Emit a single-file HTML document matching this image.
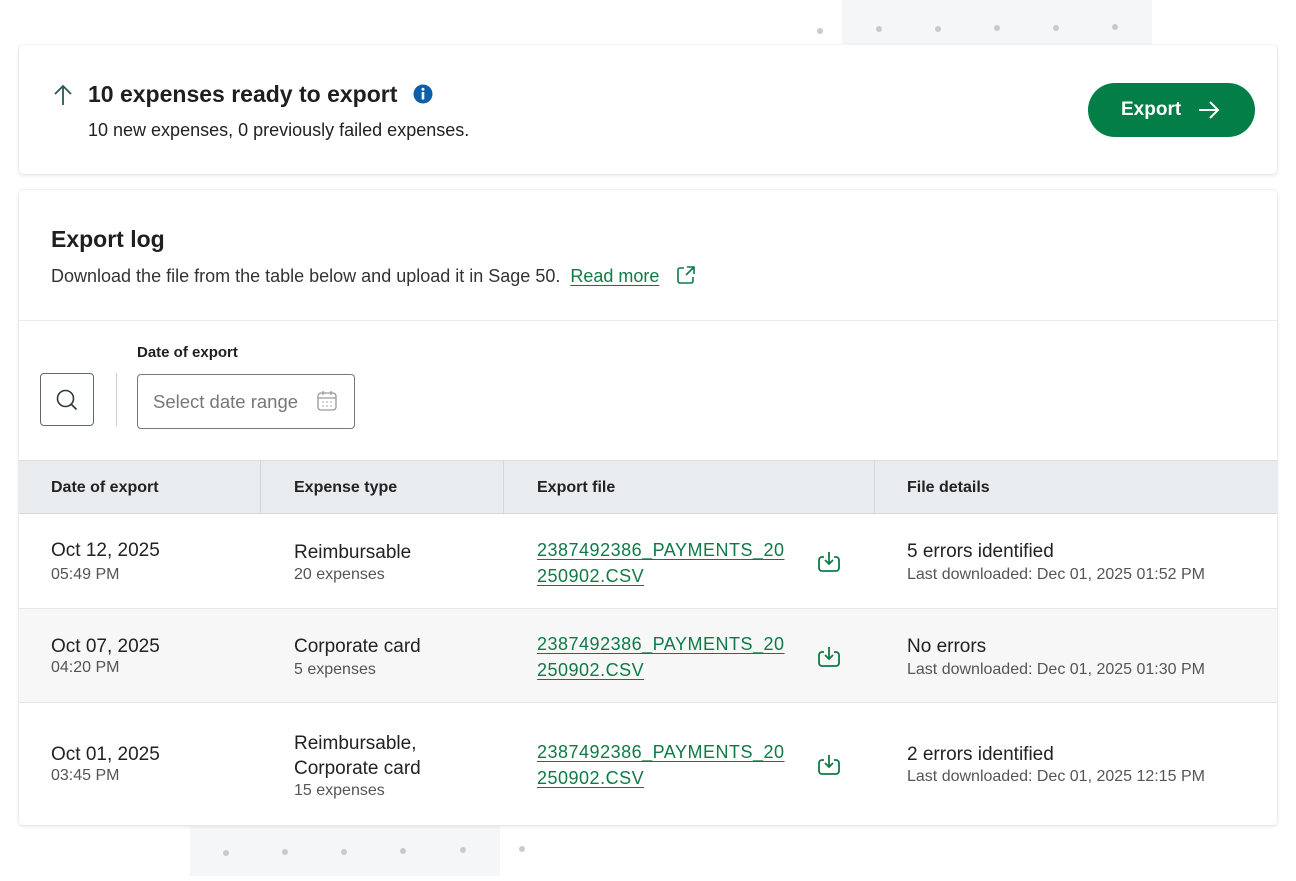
<!DOCTYPE html>
<html><head><meta charset="utf-8"><style>
*{box-sizing:border-box;margin:0;padding:0}
body{width:1296px;height:881px;background:#fff;font-family:"Liberation Sans",sans-serif;color:#1f1f1f;position:relative;overflow:hidden}
.patch{position:absolute;background:#f5f6f7}
.dot{position:absolute;width:6px;height:6px;border-radius:50%;background:#c8cacc}
.card{position:absolute;left:19px;width:1258px;background:#fff;border-radius:4px;box-shadow:0 1px 4px rgba(0,0,0,.12),0 0 1px rgba(0,0,0,.15)}
.a{position:absolute;white-space:nowrap}
.hd{font-weight:bold;font-size:16px;color:#222}
.t1{font-size:19px;color:#222}
.t2{font-size:16px;color:#555}
.lk{font-size:18px;color:#0e7a45;text-decoration:underline;text-underline-offset:3px;letter-spacing:.5px}
</style></head><body>
<div class="patch" style="left:842px;top:0;width:310px;height:44px"></div>
<div class="patch" style="left:190px;top:826px;width:310px;height:50px"></div>
<div class="dot" style="left:817px;top:28px"></div><div class="dot" style="left:876px;top:26px"></div><div class="dot" style="left:935px;top:26px"></div><div class="dot" style="left:994px;top:25px"></div><div class="dot" style="left:1053px;top:25px"></div><div class="dot" style="left:1112px;top:24px"></div>
<div class="dot" style="left:223px;top:850px"></div><div class="dot" style="left:282px;top:849px"></div><div class="dot" style="left:341px;top:849px"></div><div class="dot" style="left:400px;top:848px"></div><div class="dot" style="left:460px;top:847px"></div><div class="dot" style="left:519px;top:846px"></div>

<div class="card" style="top:45px;height:129px">
 <svg class="a" style="left:33px;top:38px" width="22" height="24" viewBox="0 0 22 24"><path d="M11 22V3M3 11l8-8 8 8" fill="none" stroke="#2a5a55" stroke-width="1.8"/></svg>
 <div class="a" style="left:69px;top:36px;font-size:23px;font-weight:bold;color:#1f1f1f">10 expenses ready to export</div>
 <svg class="a" style="left:394px;top:39px" width="20" height="20"><circle cx="10" cy="10" r="9.5" fill="#0b5fa8"/><rect x="8.7" y="8" width="2.6" height="7.5" fill="#fff"/><circle cx="10" cy="5.3" r="1.5" fill="#fff"/></svg>
 <div class="a" style="left:69px;top:75px;font-size:18px;color:#222">10 new expenses, 0 previously failed expenses.</div>
 <div class="a" style="left:1069px;top:38px;width:167px;height:54px;border-radius:27px;background:#037e47;color:#fff;font-size:19px;font-weight:bold;padding:16px 0 0 33px">Export
  <svg style="position:absolute;left:110px;top:17px" width="22" height="20" viewBox="0 0 22 20"><path d="M1 10h19M12 2l8 8-8 8" fill="none" stroke="#fff" stroke-width="2"/></svg></div>
</div>

<div class="card" style="top:190px;height:635px;overflow:hidden">
 <div class="a" style="left:32px;top:36px;font-size:23px;font-weight:bold">Export log</div>
 <div class="a" style="left:32px;top:76px;font-size:18px;color:#333">Download the file from the table below and upload it in Sage 50.&nbsp; <span style="color:#0e7a45;text-decoration:underline;text-underline-offset:3px">Read more</span></div>
 <svg class="a" style="left:657px;top:75px" width="20" height="20" viewBox="0 0 20 20"><path d="M8 3H4a2 2 0 0 0-2 2v11a2 2 0 0 0 2 2h11a2 2 0 0 0 2-2v-4M11 2h7v7M18 2l-8 8" fill="none" stroke="#0e7a45" stroke-width="1.6"/></svg>
 <div class="a" style="left:0;top:130px;width:1258px;height:1px;background:#ececec"></div>
 <div class="a" style="left:21px;top:183px;width:54px;height:53px;border:1px solid #5f6b6a;border-radius:4px"></div>
 <svg class="a" style="left:36px;top:198px" width="24" height="24" viewBox="0 0 24 24"><circle cx="10.5" cy="10.5" r="8" fill="none" stroke="#2b3b3a" stroke-width="1.6"/><path d="M16.5 16.5l5 5" stroke="#2b3b3a" stroke-width="1.6"/></svg>
 <div class="a" style="left:97px;top:183px;width:1px;height:53px;background:#ccc"></div>
 <div class="a" style="left:118px;top:154px;font-size:15px;font-weight:bold">Date of export</div>
 <div class="a" style="left:118px;top:184px;width:218px;height:55px;border:1px solid #777;border-radius:4px;font-size:18.5px;color:#777;padding:16px 0 0 15px">Select date range</div>
 <svg class="a" style="left:298px;top:200px" width="20" height="22" viewBox="0 0 20 22"><rect x="1" y="3" width="18" height="17" rx="3" fill="none" stroke="#999" stroke-width="1.3"/><path d="M1 8h18M6 1v4M14 1v4" stroke="#999" stroke-width="1.3"/><path d="M5 12h2M9 12h2M13 12h2M5 16h2M9 16h2M13 16h2" stroke="#bbb" stroke-width="1.2"/></svg>

 <div class="a" style="left:0;top:270px;width:1258px;height:54px;background:#e8ecee;border-top:1px solid #d9dddf;border-bottom:1px solid #d5d9db"></div>
 <div class="a" style="left:241px;top:270px;width:1px;height:54px;background:#d3d7d9"></div>
 <div class="a" style="left:484px;top:270px;width:1px;height:54px;background:#d3d7d9"></div>
 <div class="a" style="left:855px;top:270px;width:1px;height:54px;background:#d3d7d9"></div>
 <div class="a hd" style="left:32px;top:289px">Date of export</div>
 <div class="a hd" style="left:275px;top:289px">Expense type</div>
 <div class="a hd" style="left:518px;top:289px">Export file</div>
 <div class="a hd" style="left:888px;top:289px">File details</div>

 <div class="a" style="left:0;top:418px;width:1258px;height:95px;background:#f7f7f7;border-top:1px solid #e6e6e6;border-bottom:1px solid #e6e6e6"></div>

 <div class="a t1" style="left:32px;top:350px">Oct 12, 2025</div><div class="a t2" style="left:32px;top:376px">05:49 PM</div>
 <div class="a t1" style="left:275px;top:352px">Reimbursable</div><div class="a t2" style="left:275px;top:376px">20 expenses</div>
 <div class="a lk" style="left:518px;top:347px;line-height:26px">2387492386_PAYMENTS_20<br>250902.CSV</div>
 <div class="a t1" style="left:888px;top:351px">5 errors identified</div><div class="a t2" style="left:888px;top:376px">Last downloaded: Dec 01, 2025 01:52 PM</div>

 <div class="a t1" style="left:32px;top:446px">Oct 07, 2025</div><div class="a t2" style="left:32px;top:469px">04:20 PM</div>
 <div class="a t1" style="left:275px;top:446px">Corporate card</div><div class="a t2" style="left:275px;top:471px">5 expenses</div>
 <div class="a lk" style="left:518px;top:441px;line-height:26px">2387492386_PAYMENTS_20<br>250902.CSV</div>
 <div class="a t1" style="left:888px;top:446px">No errors</div><div class="a t2" style="left:888px;top:471px">Last downloaded: Dec 01, 2025 01:30 PM</div>

 <div class="a t1" style="left:32px;top:554px">Oct 01, 2025</div><div class="a t2" style="left:32px;top:577px">03:45 PM</div>
 <div class="a t1" style="left:275px;top:541px;line-height:25px">Reimbursable,<br>Corporate card</div><div class="a t2" style="left:275px;top:592px">15 expenses</div>
 <div class="a lk" style="left:518px;top:549px;line-height:26px">2387492386_PAYMENTS_20<br>250902.CSV</div>
 <div class="a t1" style="left:888px;top:554px">2 errors identified</div><div class="a t2" style="left:888px;top:578px">Last downloaded: Dec 01, 2025 12:15 PM</div>

 <svg class="a" style="left:798px;top:360px" width="24" height="24" viewBox="0 0 24 24"><path d="M7 7H5a3 3 0 0 0-3 3v8a3 3 0 0 0 3 3h14a3 3 0 0 0 3-3v-8a3 3 0 0 0-3-3h-2M12 2v12M8 10l4 4 4-4" fill="none" stroke="#0e7a45" stroke-width="1.8"/></svg>
 <svg class="a" style="left:798px;top:455px" width="24" height="24" viewBox="0 0 24 24"><path d="M7 7H5a3 3 0 0 0-3 3v8a3 3 0 0 0 3 3h14a3 3 0 0 0 3-3v-8a3 3 0 0 0-3-3h-2M12 2v12M8 10l4 4 4-4" fill="none" stroke="#0e7a45" stroke-width="1.8"/></svg>
 <svg class="a" style="left:798px;top:563px" width="24" height="24" viewBox="0 0 24 24"><path d="M7 7H5a3 3 0 0 0-3 3v8a3 3 0 0 0 3 3h14a3 3 0 0 0 3-3v-8a3 3 0 0 0-3-3h-2M12 2v12M8 10l4 4 4-4" fill="none" stroke="#0e7a45" stroke-width="1.8"/></svg>
</div>
</body></html>
